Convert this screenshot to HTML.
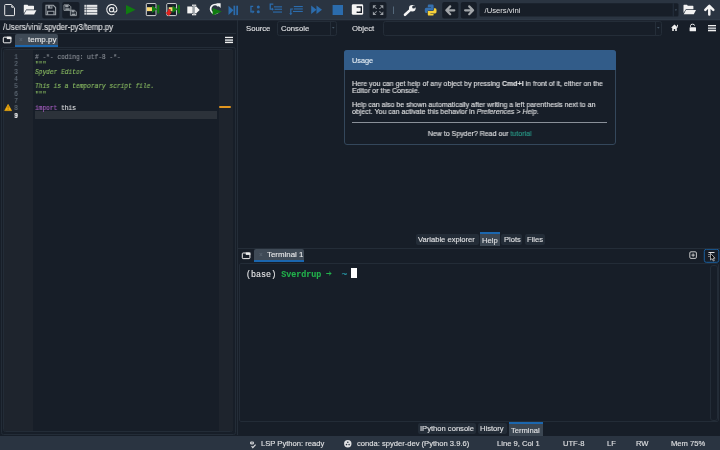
<!DOCTYPE html>
<html><head><meta charset="utf-8">
<style>
*{margin:0;padding:0;box-sizing:border-box}
body{-webkit-text-stroke:0.12px currentColor}
html,body{width:720px;height:450px;overflow:hidden;background:#171e28;font-family:"Liberation Sans",sans-serif;color:#e0e1e3}
.a{position:absolute;will-change:transform}
#tb{left:0;top:0;width:720px;height:20px;background:#2b3642}
.btn{position:absolute;top:2px;width:17px;height:16.5px;border-radius:2px;background:#19232d}
.help{transform:scaleX(0.96);transform-origin:0 0}
.mono{font-family:"Liberation Mono",monospace}
.code{transform:scaleX(0.886);transform-origin:0 0}
#status{left:0;top:435.5px;width:720px;height:14.5px;background:#2a3441;font-size:7.6px;color:#e0e1e3}
.st{position:absolute;will-change:transform;top:1.9px;line-height:12px;white-space:nowrap}
.tab{position:absolute;will-change:transform;background:#455364;border-radius:2px 2px 0 0;color:#e0e1e3}
.tabline{position:absolute;background:#1b66ae}
.frame{position:absolute;border:1px solid #2c3744;border-radius:2px}
.btab{position:absolute;will-change:transform;font-size:7.6px;line-height:12px;color:#e0e1e3;white-space:nowrap}
</style></head><body>
<!-- toolbar -->
<svg class="a" style="left:0;top:0" width="720" height="21" viewBox="0 0 720 21">
<rect x="0" y="0" width="720" height="20" fill="#2a3441"/>
<rect x="0" y="19" width="720" height="1.3" fill="#2e3946"/>
<!-- disabled button bgs -->
<rect x="42.2" y="2" width="17.3" height="16.5" rx="2" fill="#171e28"/>
<rect x="62.2" y="2" width="17.3" height="16.5" rx="2" fill="#171e28"/>
<rect x="369.5" y="2" width="17" height="16.5" rx="2" fill="#171e28"/>
<rect x="442.2" y="2" width="16.2" height="16.5" rx="2" fill="#171e28"/>
<rect x="460.8" y="2" width="16" height="16.5" rx="2" fill="#171e28"/>
<!-- new file -->
<path d="M5.6 4.5 H11.2 L14.5 7.8 V14.9 Q14.5 15.6 13.8 15.6 H5.6 Q4.7 15.6 4.7 14.8 V5.3 Q4.7 4.5 5.6 4.5 Z" fill="none" stroke="#e6e7e8" stroke-width="1"/>
<path d="M11 5 L14 8 L11.4 7.6 Z" fill="#e6e7e8"/>
<!-- open folder -->
<path d="M23.8 5.3 Q23.8 4.7 24.4 4.7 H27.5 L28.3 5.8 H33.4 Q34 5.8 34 6.4 V9.5 H26.2 L23.8 13.4 Z" fill="#f2f2f2"/>
<path d="M26.3 10.3 H36.4 L34.1 14.5 H24 Z" fill="#f2f2f2"/>
<!-- save -->
<g fill="none" stroke="#9aa0a6" stroke-width="1.1">
<path d="M46 5.3 H53.3 L55.6 7.6 V14.7 H46 Z"/>
<path d="M47.6 14.7 V11.3 H54 V14.7"/>
</g>
<rect x="47.8" y="5.3" width="4.6" height="3.3" fill="#9aa0a6"/>
<rect x="50.4" y="5.9" width="1" height="1.8" fill="#171e28"/>
<!-- save all -->
<g fill="none" stroke="#9aa0a6" stroke-width="0.9">
<path d="M64 4.9 H69 L70.8 6.7 V10.4 H64 Z"/>
<path d="M70.4 10.2 H74.6 L76.4 12 V15.6 H70.4 Z"/>
</g>
<rect x="65.2" y="4.9" width="3.3" height="2.4" fill="#9aa0a6"/>
<rect x="65.3" y="8.3" width="4.4" height="1.6" fill="#9aa0a6"/>
<rect x="71.5" y="10.2" width="3" height="2.2" fill="#9aa0a6"/>
<rect x="71.6" y="13.6" width="3.8" height="1.6" fill="#9aa0a6"/>
<!-- list -->
<g fill="#e6e7e8">
<rect x="84.4" y="4.8" width="1.5" height="2.1"/><rect x="84.4" y="7.4" width="1.5" height="2.1"/><rect x="84.4" y="10" width="1.5" height="2.1"/><rect x="84.4" y="12.6" width="1.5" height="2.1"/>
<rect x="86.5" y="4.8" width="10.8" height="2.1"/><rect x="86.5" y="7.4" width="10.8" height="2.1"/><rect x="86.5" y="10" width="10.8" height="2.1"/><rect x="86.5" y="12.6" width="10.8" height="2.1"/>
</g>
<!-- @ -->
<g fill="none" stroke="#eeeeee" stroke-width="1.1">
<path d="M116.9 9.6 A5.1 5.1 0 1 0 114.6 13.9"/>
<circle cx="111.5" cy="9.7" r="2.1"/>
<path d="M113.6 7.2 V10.9 Q113.6 12.1 115 12.1 Q116.9 12.1 116.9 9.6"/>
</g>
<!-- run -->
<path d="M126 5 L135.6 9.8 L126 14.6 Z" fill="#107c10"/>
<!-- run cell -->
<g>
<rect x="146.3" y="3.6" width="9.6" height="12" rx="0.8" fill="none" stroke="#d8d8d8" stroke-width="1"/>
<rect x="147" y="4.2" width="8.3" height="2.9" fill="#171e28"/>
<rect x="147" y="11.2" width="8.3" height="3.8" fill="#171e28"/>
<rect x="147" y="7.2" width="5.4" height="3.9" fill="#f8d872"/>
<path d="M152 5.4 L157.2 9.2 L152 13 Z" fill="#107c10"/>
<rect x="157.3" y="5" width="2.1" height="8.4" fill="#107c10"/>
</g>
<!-- run cell advance -->
<g>
<rect x="166.8" y="3.6" width="9.6" height="12" rx="0.8" fill="none" stroke="#d8d8d8" stroke-width="1"/>
<rect x="167.5" y="4.2" width="8.3" height="2.9" fill="#171e28"/>
<rect x="167.5" y="11.2" width="8.3" height="3.8" fill="#171e28"/>
<path d="M168.8 7.3 H172.8 V11.3 H170.5 V9.2 H168.8 Z" fill="#f8d872"/>
<path d="M168.3 9.3 H170.4 V12.2 H171.8 L168.9 15.9 L165.3 12.6 L167.3 12.3 Z" fill="#e0201c"/>
<path d="M172.5 5.4 L177.7 9.2 L172.5 13 Z" fill="#107c10"/>
<rect x="177.8" y="5" width="2.1" height="8.4" fill="#107c10"/>
</g>
<!-- run selection -->
<g>
<rect x="187.3" y="6.5" width="5.4" height="6.9" fill="#f5f5f5"/>
<rect x="192" y="4.6" width="4.2" height="1.3" fill="#e8e8e8"/>
<rect x="192" y="14" width="4.2" height="1.3" fill="#e8e8e8"/>
<rect x="193.1" y="5.5" width="2" height="9" fill="#a9aeb3"/>
<rect x="195" y="6.5" width="1.2" height="6.9" fill="#f5f5f5"/>
<path d="M196 6.3 L199.7 9.9 L196 13.6 Z" fill="#f5f5f5"/>
</g>
<!-- re-run -->
<g>
<path d="M218.6 6.2 A4.5 4.5 0 1 0 218.9 11.4" fill="none" stroke="#f5f5f5" stroke-width="1.7"/>
<path d="M216 3.3 L220.6 3.3 L220.6 7.9 Z" fill="#f5f5f5"/>
<path d="M212.6 8 L221.8 11.6 L212.6 15.5 Z" fill="#107c10"/>
</g>
<!-- debug -->
<g fill="#2b6cad">
<path d="M228.5 5.7 L233.5 10.3 L228.5 15 Z"/>
<rect x="233.5" y="5.7" width="1.7" height="9.4"/>
<rect x="236.3" y="5.7" width="1.7" height="9.4"/>
</g>
<!-- step -->
<g fill="#2b6cad">
<path d="M250.3 5.8 H253.2 V7.1 H251.6 V11.2 H252.6 V10 L254.6 11.8 L252.6 13.6 V12.5 H250.3 Z"/>
<circle cx="258.3" cy="6.9" r="1.5"/>
<circle cx="258.3" cy="11.8" r="1.5"/>
</g>
<!-- step into -->
<g fill="#2b6cad">
<path d="M269.6 3.6 H273.3 V4.8 H270.9 V8.6 H272 V7.6 L273.8 9.2 L272 10.8 V9.8 H269.6 Z"/>
<rect x="274" y="6.3" width="8" height="1.1"/>
<rect x="274.5" y="8.7" width="7.5" height="1.1"/>
<rect x="273" y="11.5" width="9" height="1.1"/>
</g>
<!-- step return -->
<g fill="#2b6cad">
<rect x="293.8" y="6" width="9" height="1.1"/>
<rect x="293.8" y="8.4" width="9" height="1.1"/>
<rect x="293" y="10.9" width="9.8" height="1.1"/>
<path d="M290.2 8.4 H293 V9.6 H291.4 V13.2 H292.4 L290.8 15.2 L289.2 13.2 H290.2 Z"/>
</g>
<!-- continue -->
<g fill="#2b6cad">
<path d="M311.2 5.5 L316.5 9.8 L311.2 14 Z"/>
<path d="M316.5 5.5 L322 9.8 L316.5 14 Z"/>
</g>
<!-- stop -->
<rect x="332.6" y="5" width="10.4" height="10" fill="#2b6cad"/>
<!-- debug cell (white) -->
<g>
<rect x="351.8" y="4.3" width="11.4" height="10.5" rx="1.4" fill="#f5f5f5"/>
<path d="M356.6 6.2 H362 V13.1 H356.6 V11.6 H360.6 V7.7 H356.6 Z" fill="#171e28"/>
<path d="M356.6 8.9 H358.4 V7.6 L360.3 9.65 L358.4 11.7 V10.4 H356.6 Z" fill="#f5f5f5"/>
</g>
<!-- maximize -->
<g fill="#9a9fa5">
<path d="M372.9 5.3 H376.4 L372.9 8.8 Z"/>
<path d="M383.3 5.3 H379.8 L383.3 8.8 Z"/>
<path d="M372.9 14.9 H376.4 L372.9 11.4 Z"/>
<path d="M383.3 14.9 H379.8 L383.3 11.4 Z"/>
<path d="M374.2 6.6 L376.6 9 M381.9 6.6 L379.5 9 M374.2 13.6 L376.6 11.2 M381.9 13.6 L379.5 11.2" stroke="#9a9fa5" stroke-width="1"/>
</g>
<g fill="#6a7078">
<circle cx="376.5" cy="8.3" r="0.6"/><circle cx="379.7" cy="8.3" r="0.6"/><circle cx="376.5" cy="11.8" r="0.6"/><circle cx="379.7" cy="11.8" r="0.6"/>
</g>
<!-- separator -->
<rect x="393" y="6.5" width="1" height="7.5" fill="#54687a"/>
<!-- wrench -->
<g>
<path d="M405 14.8 L410.3 9.9" stroke="#f5f5f5" stroke-width="2.6" stroke-linecap="round"/>
<circle cx="412.3" cy="8.2" r="3.3" fill="#f5f5f5"/>
<circle cx="413.6" cy="7" r="1.5" fill="#2a3441"/>
<path d="M413.2 6.6 L416.8 4.8 L417 8 Z" fill="#2a3441"/>
</g>
<!-- python -->
<g>
<path d="M428.8 4.6 H432.4 Q433.6 4.6 433.6 5.8 V9.6 Q433.6 10.4 432.8 10.4 H428.6 Q427.3 10.4 427.3 11.6 V13 H426.1 Q424.8 13 424.8 11.2 V9.2 Q424.8 7.7 426.2 7.7 H431 V7.2 H427.8 V5.8 Q427.8 4.6 428.8 4.6 Z" fill="#3670ae"/>
<path d="M432.6 15.6 H429 Q427.8 15.6 427.8 14.4 V10.8 Q427.8 10.9 428.6 10.9 H432.8 Q434 10.9 434 9.6 V8.2 H435.2 Q436.5 8.2 436.5 10 V12 Q436.5 13.4 435.1 13.4 H430.4 V13.9 H433.6 V14.4 Q433.6 15.6 432.6 15.6 Z" fill="#f5d03a"/>
</g>
<!-- arrows -->
<path d="M450.2 6.4 L446.3 10.3 L450.2 14.2 M446.6 10.3 H454.3" stroke="#a3a7ab" stroke-width="2.2" stroke-linecap="round" stroke-linejoin="round" fill="none"/>
<path d="M469.2 6.4 L473.1 10.3 L469.2 14.2 M472.8 10.3 H465.1" stroke="#a3a7ab" stroke-width="2.2" stroke-linecap="round" stroke-linejoin="round" fill="none"/>
<!-- path combobox -->
<rect x="479.5" y="3.3" width="199" height="13.2" rx="1.5" fill="#171e28"/>
<rect x="672.8" y="3.3" width="0.8" height="13.2" fill="#293544"/>
<path d="M674.8 9.6 H677 L675.9 10.7 Z" fill="#54687a"/>
<text x="484.5" y="13" font-family="Liberation Sans" font-size="7.7" fill="#e0e1e3">/Users/vini</text>
<!-- folder right -->
<path d="M683.5 5.3 Q683.5 4.8 684 4.8 H687 L687.8 5.8 H692.8 Q693.4 5.8 693.4 6.4 V9.3 H685.9 L683.5 13 Z" fill="#f2f2f2"/>
<path d="M686 10.1 H696 L693.8 14.2 H683.7 Z" fill="#f2f2f2"/>
<!-- up arrow -->
<path d="M709.3 14.6 V7.2 M705.3 9.9 L709.3 5.9 L713.3 9.9" stroke="#f5f5f5" stroke-width="2.5" stroke-linecap="round" stroke-linejoin="round" fill="none"/>
</svg>

<!-- editor pane -->
<div class="a" style="left:3px;top:21px;font-size:8.6px;white-space:nowrap;color:#e0e1e3;line-height:12px;transform:scaleX(0.915);transform-origin:0 0">/Users/vini/.spyder-py3/temp.py</div>
<div class="a" style="left:0;top:33px;width:236px;height:1px;background:#242d38"></div>
<svg class="a" style="left:0;top:34px" width="236" height="14" viewBox="0 34 236 14">
<rect x="3.3" y="37.2" width="7.6" height="5.6" rx="0.8" fill="none" stroke="#eeeeee" stroke-width="1"/>
<rect x="6.8" y="36.7" width="4.6" height="2.4" fill="#eeeeee"/>
<rect x="225" y="36.8" width="8" height="1.3" fill="#f0f0f0"/>
<rect x="225" y="39.2" width="8" height="2" fill="#b8bcc0"/>
<rect x="225" y="41.8" width="8" height="1.3" fill="#f0f0f0"/>
</svg>
<div class="tab" style="left:15px;top:34px;width:43px;height:11px;background:#3f4a56"></div>
<div class="tabline" style="left:15px;top:45px;width:43px;height:1.8px"></div>
<div class="a" style="left:19px;top:36px;font-size:6.5px;color:#5a6571">×</div>
<div class="a" style="left:27.5px;top:35px;font-size:8px;color:#e6e7e8;line-height:10px">temp.py</div>

<div class="a" style="left:1px;top:46.5px;width:234.5px;height:388px;border:1px solid #232c37;border-radius:2.5px"></div>
<div class="a" style="left:3px;top:49.3px;width:230.3px;height:383px;border:1px solid #232c37;border-radius:2.5px"></div>
<div class="a" style="left:4px;top:50.3px;width:29.3px;height:381px;background:#1e242d"></div>
<div class="a" style="left:218.5px;top:50.3px;width:14px;height:381px;background:#1e242d"></div>
<div class="a" style="left:218.8px;top:106px;width:12.2px;height:2px;background:#e2961f;border-radius:1px"></div>
<div class="a" style="left:35px;top:111px;width:182px;height:7.7px;background:#2c323a"></div>

<div class="a mono code" style="left:34.6px;top:54px;font-size:7px;line-height:7.34px;white-space:pre;color:#e6e7e8"><span style="color:#8d9299"># -*- coding: utf-8 -*-</span>
<span style="color:#8cbf63">"""</span>
<span style="color:#8cbf63;font-style:italic">Spyder Editor</span>

<span style="color:#8cbf63;font-style:italic">This is a temporary script file.</span>
<span style="color:#8cbf63">"""</span>

<span style="color:#a75ec2">import</span> this
</div>
<div class="a mono code" style="left:8px;top:53.8px;width:10px;text-align:right;font-size:7px;transform-origin:100% 0;line-height:7.34px;white-space:pre;color:#65707c">1
2
3
4
5
6
7
8
<span style="color:#ffffff;font-weight:bold">9</span></div>
<svg class="a" style="left:0;top:100px" width="14" height="14" viewBox="0 100 14 14">
<path d="M8.1 104.4 L11.5 110.6 H4.7 Z" fill="#f2ad0d" stroke="#f2ad0d" stroke-width="0.7" stroke-linejoin="round"/>
<rect x="7.7" y="106.2" width="0.8" height="2.3" fill="#8a5a10"/>
<rect x="7.7" y="109" width="0.8" height="0.8" fill="#8a5a10"/>
</svg>

<!-- vertical splitter -->
<div class="a" style="left:237px;top:20px;width:1px;height:415px;background:#242d38"></div>

<!-- help pane -->
<div class="a" style="left:245.7px;top:22.8px;font-size:7.7px;line-height:12px">Source</div>
<div class="a" style="left:277px;top:21px;width:60px;height:14.5px;border:1px solid #242d38;border-radius:2.5px"></div>
<div class="a" style="left:329.5px;top:21.5px;width:1px;height:13.5px;background:#242d38"></div>
<svg class="a" style="left:331px;top:26px" width="5" height="4"><path d="M1 1.2 H3.6 L2.3 2.5 Z" fill="#54687a"/></svg>
<div class="a" style="left:280.5px;top:22.8px;font-size:7.7px;line-height:12px">Console</div>
<div class="a" style="left:351.5px;top:22.8px;font-size:7.7px;line-height:12px">Object</div>
<div class="a" style="left:382.5px;top:21px;width:279px;height:14.5px;border:1px solid #242d38;border-radius:2.5px"></div>
<div class="a" style="left:655px;top:21.5px;width:1px;height:13.5px;background:#242d38"></div>
<svg class="a" style="left:656px;top:26px" width="5" height="4"><path d="M1 1.2 H3.6 L2.3 2.5 Z" fill="#54687a"/></svg>
<svg class="a" style="left:668px;top:22px" width="52" height="12" viewBox="668 22 52 12">
<path d="M674.5 24.5 L671 27.8 H672.2 V31 H673.8 V29 H675.2 V31 H676.8 V27.8 H678 Z" fill="#f0f0f0"/>
<rect x="677" y="24.8" width="0.9" height="2" fill="#f0f0f0"/>
<path d="M690.5 26.8 V25.6 Q690.5 24.2 692.6 24.2 Q694.6 24.2 694.6 25.6" fill="none" stroke="#f0f0f0" stroke-width="1"/>
<rect x="689.6" y="27.3" width="6.4" height="4" rx="0.5" fill="#f0f0f0"/>
<rect x="708" y="25" width="8" height="1.3" fill="#f0f0f0"/>
<rect x="708" y="27.4" width="8" height="2" fill="#b8bcc0"/>
<rect x="708" y="30" width="8" height="1.3" fill="#f0f0f0"/>
</svg>

<div class="a" style="left:343.5px;top:50.3px;width:272px;height:94.7px;border:1px solid #34475b;border-radius:3px;background:#171e28"></div>
<div class="a" style="left:343.5px;top:50.3px;width:272px;height:19.5px;background:#325c89;border-radius:3px 3px 0 0"></div>
<div class="a" style="left:352px;top:55px;font-size:7.3px;line-height:12px;color:#e6eef5">Usage</div>
<div class="a help" style="left:352px;top:79.8px;font-size:7.3px;line-height:7.3px;white-space:nowrap">Here you can get help of any object by pressing <b>Cmd+I</b> in front of it, either on the<br>Editor or the Console.</div>
<div class="a help" style="left:352px;top:100.9px;font-size:7.3px;line-height:7.3px;white-space:nowrap">Help can also be shown automatically after writing a left parenthesis next to an<br>object. You can activate this behavior in <i>Preferences &gt; Help</i>.</div>
<div class="a" style="left:352px;top:121.8px;width:255px;height:1px;background:#8a9099"></div>
<div class="a help" style="left:352px;top:128.5px;width:266px;text-align:center;font-size:7.3px;white-space:nowrap">New to Spyder? Read our <span style="color:#2a9d8a">tutorial</span></div>

<!-- help pane bottom tabs -->
<div class="a" style="left:415.8px;top:233.5px;width:62.7px;height:11px;background:#232c37;border-radius:2px"></div>
<div class="a" style="left:480px;top:232px;width:20px;height:14px;background:#3b4652"></div>
<div class="a" style="left:480px;top:232px;width:20px;height:2px;background:#1b66ae"></div>
<div class="a" style="left:501.4px;top:233.5px;width:21.4px;height:11px;background:#232c37;border-radius:2px"></div>
<div class="a" style="left:524.8px;top:233.5px;width:19.8px;height:11px;background:#232c37;border-radius:2px"></div>
<div class="btab" style="left:418.2px;top:233.5px">Variable explorer</div>
<div class="btab" style="left:482.2px;top:235px">Help</div>
<div class="btab" style="left:503.6px;top:233.5px">Plots</div>
<div class="btab" style="left:526.7px;top:233.5px">Files</div>

<!-- console pane -->
<div class="a" style="left:238px;top:247.5px;width:482px;height:1px;background:#242d38"></div>
<svg class="a" style="left:238px;top:249px" width="482" height="14" viewBox="238 249 482 14">
<rect x="242.3" y="253" width="7.6" height="5.6" rx="0.8" fill="none" stroke="#eeeeee" stroke-width="1"/>
<rect x="245.8" y="252.5" width="4.6" height="2.4" fill="#eeeeee"/>
<rect x="689.8" y="251.8" width="6.6" height="6.6" rx="1.2" fill="none" stroke="#d8d8d8" stroke-width="0.9"/>
<path d="M693.1 253.4 V256.8 M691.4 255.1 H694.8" stroke="#d8d8d8" stroke-width="0.9"/>
<rect x="704.3" y="249.3" width="14.5" height="13" rx="2" fill="#171e28" stroke="#1a5f9e" stroke-width="1"/>
<rect x="708.5" y="252" width="6" height="1" fill="#e0e0e0"/>
<rect x="708.5" y="254" width="1" height="1" fill="#e0e0e0"/>
<rect x="708.5" y="256" width="1" height="1" fill="#e0e0e0"/>
<path d="M710.5 253.3 V260 L712 258.6 L713.3 261 L714.3 260.5 L713.1 258.2 H715 Z" fill="#000" stroke="#fff" stroke-width="0.6"/>
</svg>
<div class="tab" style="left:254px;top:249px;width:50px;height:11.2px;background:#3f4a56"></div>
<div class="tabline" style="left:254px;top:260.2px;width:50px;height:1.8px"></div>
<div class="a" style="left:258.5px;top:251px;font-size:6.5px;color:#5a6571">×</div>
<div class="a" style="left:266.8px;top:250px;font-size:7.9px;line-height:10px;color:#e6e7e8">Terminal 1</div>
<div class="a" style="left:239px;top:262.5px;width:480px;height:158.5px;border:1px solid #232c37;border-radius:2px"></div>
<div class="a" style="left:710px;top:264.5px;width:8px;height:156px;border:1px solid #232c37;border-radius:3px"></div>
<div class="a mono" style="left:245.5px;top:268.5px;font-size:8.4px;line-height:12px;white-space:pre;color:#e6e7e8">(base) <b style="color:#22b14c">Sverdrup</b>    <span style="color:#2aa9b8;font-size:9.5px">~</span></div>
<div class="a" style="left:351px;top:268px;width:5.5px;height:10px;background:#ffffff"></div>
<svg class="a" style="left:324px;top:268px" width="10" height="10" viewBox="0 0 10 10"><path d="M2.6 5.5 H7 M5.4 4 L7 5.5 L5.4 7" fill="none" stroke="#22b14c" stroke-width="1" stroke-linecap="round" stroke-linejoin="round"/></svg>


<div class="a" style="left:418.2px;top:423.2px;width:58.3px;height:10.7px;background:#232c37;border-radius:2px"></div>
<div class="a" style="left:478px;top:423.2px;width:29.3px;height:10.7px;background:#232c37;border-radius:2px"></div>
<div class="a" style="left:508.6px;top:421.8px;width:34.3px;height:13.5px;background:#3b4652"></div>
<div class="a" style="left:508.6px;top:421.8px;width:34.3px;height:2px;background:#1b66ae"></div>
<div class="btab" style="left:420px;top:423px">IPython console</div>
<div class="btab" style="left:480px;top:423px">History</div>
<div class="btab" style="left:511px;top:424.5px">Terminal</div>

<!-- status bar -->
<div id="status" class="a">
<svg class="a" style="left:246px;top:2px" width="12" height="12" viewBox="0 0 12 12"><ellipse cx="6" cy="4.9" rx="2" ry="1.7" fill="#e0e1e3"/><rect x="5.7" y="3.2" width="0.7" height="2.6" fill="#2a3441"/><path d="M5.6 8.2 L6.8 9.6 L9.6 6.6" fill="none" stroke="#e0e1e3" stroke-width="1.1"/></svg>
<div class="st" style="left:261.2px">LSP Python: ready</div>
<svg class="a" style="left:342px;top:2px" width="12" height="12" viewBox="0 0 12 12"><circle cx="5.8" cy="5.7" r="3.7" fill="#e0e1e3"/><circle cx="5.8" cy="4.2" r="0.8" fill="#2a3441"/><circle cx="4.5" cy="6.6" r="0.8" fill="#2a3441"/><circle cx="7.1" cy="6.6" r="0.8" fill="#2a3441"/></svg>
<div class="st" style="left:356.7px">conda: spyder-dev (Python 3.9.6)</div>
<div class="st" style="left:496.9px">Line 9, Col 1</div>
<div class="st" style="left:563px">UTF-8</div>
<div class="st" style="left:607px">LF</div>
<div class="st" style="left:636.4px">RW</div>
<div class="st" style="left:671px">Mem 75%</div>
</div>
</body></html>
